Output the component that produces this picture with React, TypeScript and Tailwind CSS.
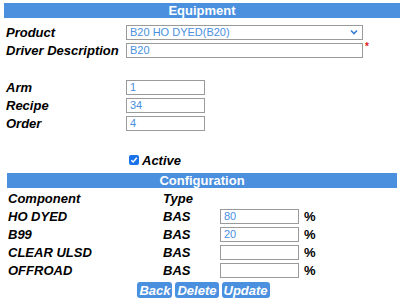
const BLUE = 'bg-[#4a90df]';

function Field({ value, w = 'w-[237px]' }: { value: string; w?: string }) {
  return (
    <div className={`${w} h-[15px] border border-[#9a9a9a] bg-white flex items-center pl-[3px] text-[11px] text-[#4a8fe0] leading-none`}>
      {value}
    </div>
  );
}

function Label({ children, w = 'w-[120px]' }: { children: React.ReactNode; w?: string }) {
  return <div className={`${w} shrink-0 font-bold italic text-[13px] text-black leading-none`}>{children}</div>;
}

const components = [
  { name: 'HO DYED', type: 'BAS', pct: '80' },
  { name: 'B99', type: 'BAS', pct: '20' },
  { name: 'CLEAR ULSD', type: 'BAS', pct: '' },
  { name: 'OFFROAD', type: 'BAS', pct: '' },
];

export default function App() {
  return (
    <div className="w-[404px] h-[306px] bg-white px-[4px] pt-[3px]" style={{ fontFamily: '"Liberation Sans", Arial, sans-serif' }}>
      <div className={`${BLUE} h-[15px] flex items-center justify-center text-white font-bold text-[13px] leading-none`}>
        Equipment
      </div>

      <div className="mt-[5px] pl-[2px]">
        <div className="h-[18px] flex items-center">
          <Label>Product</Label>
          <div className="w-[237px] h-[15px] border border-[#9a9a9a] bg-white flex items-center justify-between pl-[3px] pr-[4px] text-[11px] text-[#4a8fe0] leading-none">
            <span>B20 HO DYED(B20)</span>
            <svg width="8" height="6" viewBox="0 0 8 6">
              <path d="M1 1.5 L4 4.5 L7 1.5" fill="none" stroke="#3a7fd8" strokeWidth="1.6" />
            </svg>
          </div>
        </div>
        <div className="h-[18px] flex items-center">
          <Label>Driver Description</Label>
          <Field value="B20" />
          <span className="self-start mt-[1px] ml-[2px] text-[10px] font-bold text-[#e02020] leading-none">*</span>
        </div>

        <div className="h-[19px]" />

        <div className="h-[18px] flex items-center">
          <Label>Arm</Label>
          <Field value="1" w="w-[79px]" />
        </div>
        <div className="h-[18px] flex items-center">
          <Label>Recipe</Label>
          <Field value="34" w="w-[79px]" />
        </div>
        <div className="h-[18px] flex items-center">
          <Label>Order</Label>
          <Field value="4" w="w-[79px]" />
        </div>

        <div className="mt-[19px] h-[18px] flex items-center pl-[123px] gap-[3px]">
          <div className="w-[10px] h-[10px] rounded-[2px] bg-[#1a73e8] flex items-center justify-center">
            <svg width="8" height="8" viewBox="0 0 8 8">
              <path d="M1.3 4.2 L3.2 6 L6.8 1.8" fill="none" stroke="white" strokeWidth="1.5" />
            </svg>
          </div>
          <span className="font-bold italic text-[13px] leading-none">Active</span>
        </div>
      </div>

      <div className={`${BLUE} mt-[4px] mx-[3px] h-[15px] flex items-center justify-center text-white font-bold text-[13px] leading-none`}>
        Configuration
      </div>

      <div className="pl-[4px] mt-[1px]">
        <div className="h-[18px] flex items-center">
          <Label w="w-[155px]">Component</Label>
          <Label w="w-[57px]">Type</Label>
        </div>
        {components.map((c) => (
          <div key={c.name} className="h-[18px] flex items-center">
            <Label w="w-[155px]">{c.name}</Label>
            <Label w="w-[57px]">{c.type}</Label>
            <Field value={c.pct} w="w-[79px]" />
            <span className="ml-[5px] font-bold text-[13px] leading-none">%</span>
          </div>
        ))}
      </div>

      <div className="mt-[3px] flex justify-center gap-[3px] pl-[3px]">
        {['Back', 'Delete', 'Update'].map((b) => (
          <button
            key={b}
            className={`${BLUE} h-[16px] px-[2px] rounded-[3px] text-white font-bold italic text-[13px] leading-none flex items-center`}
          >
            {b}
          </button>
        ))}
      </div>
    </div>
  );
}
